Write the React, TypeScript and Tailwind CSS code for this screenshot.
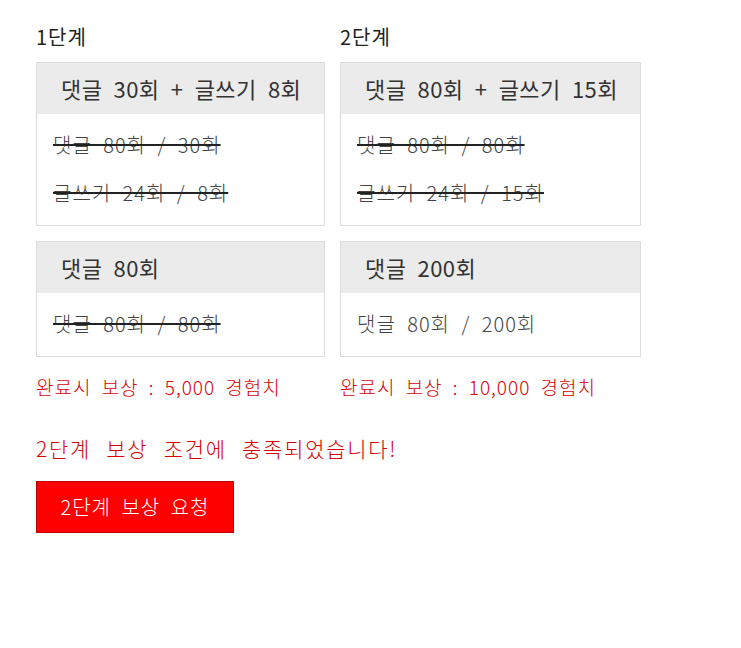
const FONT = "font-['Noto_Sans_CJK_KR','Noto_Sans',sans-serif]";

type Line = { text: string; done: boolean };
type Quest = { title: string; lines: Line[] };
type Stage = { label: string; width: string; quests: Quest[]; reward: string };

const stages: Stage[] = [
  {
    label: "1단계",
    width: "w-[289px]",
    quests: [
      {
        title: "댓글 30회 + 글쓰기 8회",
        lines: [
          { text: "댓글 80회 / 30회", done: true },
          { text: "글쓰기 24회 / 8회", done: true },
        ],
      },
      { title: "댓글 80회", lines: [{ text: "댓글 80회 / 80회", done: true }] },
    ],
    reward: "완료시 보상 : 5,000 경험치",
  },
  {
    label: "2단계",
    width: "w-[301px]",
    quests: [
      {
        title: "댓글 80회 + 글쓰기 15회",
        lines: [
          { text: "댓글 80회 / 80회", done: true },
          { text: "글쓰기 24회 / 15회", done: true },
        ],
      },
      { title: "댓글 200회", lines: [{ text: "댓글 80회 / 200회", done: false }] },
    ],
    reward: "완료시 보상 : 10,000 경험치",
  },
];

function QuestBox({ quest }: { quest: Quest }) {
  return (
    <div className="border border-[#dcdcdc] bg-white">
      <div className="whitespace-nowrap bg-[#ebebeb] pl-6 text-[22px] leading-[51px] tracking-[0.4px] [word-spacing:6px] text-[#333]">
        {quest.title}
      </div>
      <div className="flex flex-col gap-[18px] px-4 pt-4 pb-[17px]">
        {quest.lines.map((l) => (
          <p
            key={l.text}
            className={
              l.done
                ? "whitespace-nowrap text-[20px] leading-[30px] font-light tracking-[1px] [word-spacing:6px] text-[#444] line-through decoration-[#222] decoration-2"
                : "whitespace-nowrap text-[20px] leading-[30px] font-light tracking-[1px] [word-spacing:6px] text-[#444]"
            }
          >
            {l.text}
          </p>
        ))}
      </div>
    </div>
  );
}

export default function App() {
  return (
    <div className={`min-h-screen bg-white px-9 pt-[25px] ${FONT}`}>
      <div className="flex gap-[15px]">
        {stages.map((s) => (
          <div key={s.label} className={`flex flex-col ${s.width}`}>
            <h3 className="mb-[13px] text-[20px] leading-6 font-normal tracking-[1px] text-[#222]">{s.label}</h3>
            <div className="flex flex-col gap-[15px]">
              {s.quests.map((q) => (
                <QuestBox key={q.title} quest={q} />
              ))}
            </div>
            <p className="mt-[18px] whitespace-nowrap text-[19px] leading-6 font-light tracking-[1px] [word-spacing:5px] text-[#d80000]">
              {s.reward}
            </p>
          </div>
        ))}
      </div>
      <p className="mt-[37px] text-[21px] leading-6 font-light tracking-[1.7px] [word-spacing:9px] text-[#d80000]">
        2단계 보상 조건에 충족되었습니다!
      </p>
      <button className="mt-[21px] h-[52px] w-[198px] border border-[#c00000] bg-[#ff0000] text-[20px] font-light tracking-[1px] [word-spacing:5px] text-white">
        2단계 보상 요청
      </button>
    </div>
  );
}
